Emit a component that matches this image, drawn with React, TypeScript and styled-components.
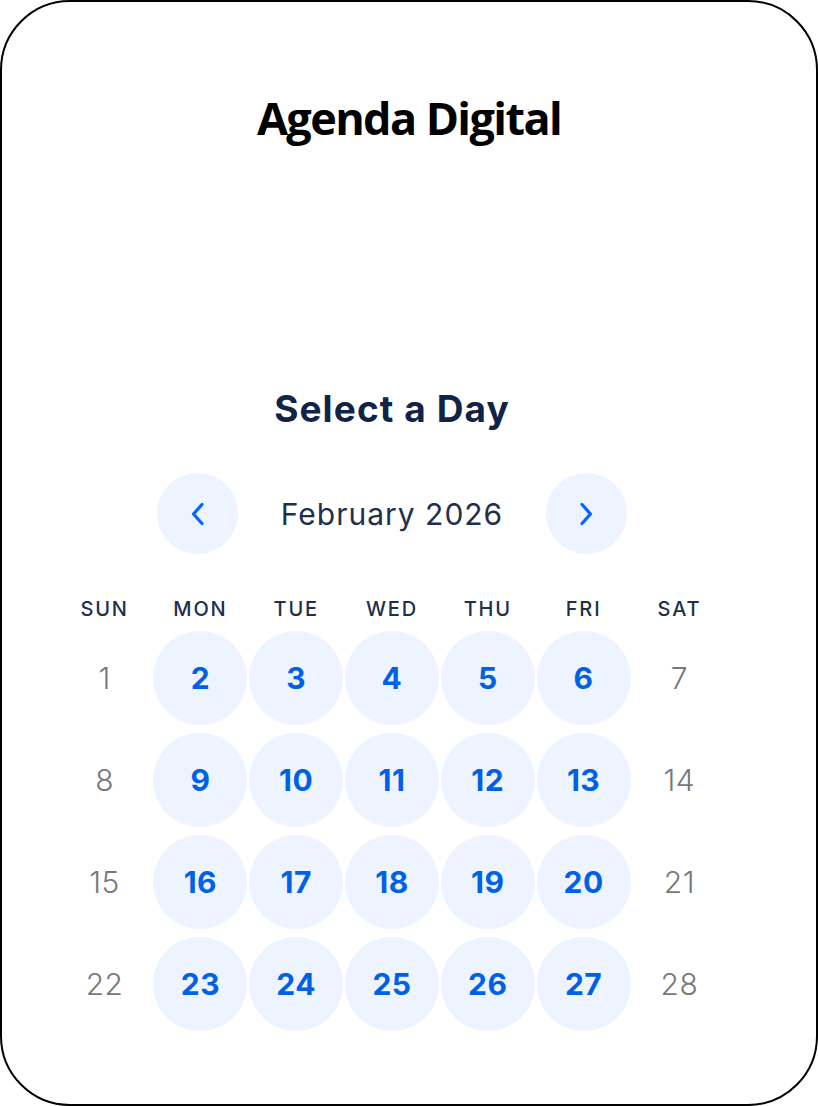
import React from "react";
import styled, { createGlobalStyle } from "styled-components";

const GlobalStyle = createGlobalStyle`
  html, body { margin: 0; padding: 0; background: #ffffff; }
  * { box-sizing: border-box; }
`;

const Frame = styled.div`
  width: 818px;
  height: 1106px;
  border: 2px solid #000000;
  border-radius: 70px;
  background: #ffffff;
  display: flex;
  flex-direction: column;
  align-items: center;
  overflow: hidden;
`;

const Title = styled.h1`
  margin: 93px 0 0 0;
  font-family: "Open Sans", "Liberation Sans", sans-serif;
  font-weight: 700;
  font-size: 45px;
  line-height: 1;
  letter-spacing: -1.6px;
  color: #000000;
`;

const Scheduler = styled.section`
  margin-top: 250px;
  align-self: stretch;
  padding: 0 88px 0 54px;
  display: flex;
  flex-direction: column;
  align-items: center;
  font-family: Inter, "Liberation Sans", sans-serif;
  color: #1a2b49;
`;

const Heading = styled.h2`
  margin: 0;
  font-size: 37px;
  line-height: 1;
  font-weight: 700;
  letter-spacing: 1.1px;
  color: #0f2447;
`;

const NavRow = styled.div`
  margin-top: 46px;
  width: 470px;
  display: flex;
  align-items: center;
  justify-content: space-between;
`;

const NavButton = styled.button`
  width: 81px;
  height: 81px;
  border-radius: 50%;
  border: none;
  background: #eef4ff;
  display: flex;
  align-items: center;
  justify-content: center;
  padding: 0;
  cursor: pointer;
`;

const Month = styled.div`
  font-size: 30px;
  font-weight: 400;
  color: #1f2f4d;
  letter-spacing: 1px;
`;

const HeaderGrid = styled.div`
  margin-top: 39px;
  display: grid;
  grid-template-columns: repeat(7, 95.8px);
`;

const Weekday = styled.div`
  height: 32px;
  display: flex;
  align-items: center;
  justify-content: center;
  font-size: 20px;
  font-weight: 500;
  color: #1f2f4d;
  letter-spacing: 1.8px;
`;

const DaysGrid = styled.div`
  margin-top: 2px;
  display: grid;
  grid-template-columns: repeat(7, 95.8px);
  grid-auto-rows: 102px;
`;

const Cell = styled.div`
  display: flex;
  align-items: center;
  justify-content: center;
`;

const Day = styled.button<{ $available: boolean }>`
  width: 94px;
  height: 94px;
  border-radius: 50%;
  border: none;
  padding: 0;
  display: flex;
  align-items: center;
  justify-content: center;
  font-family: Inter, "Liberation Sans", sans-serif;
  font-size: 30px;
  letter-spacing: 0.5px;
  background: ${(p) => (p.$available ? "#eef4ff" : "transparent")};
  color: ${(p) => (p.$available ? "#0060e6" : "#76787b")};
  font-weight: ${(p) => (p.$available ? 700 : 300)};
`;

const Chevron = ({ dir }: { dir: "left" | "right" }) => (
  <svg width="16" height="26" viewBox="0 0 16 26" fill="none">
    <path
      d={dir === "left" ? "M12 3.5 L3.5 13 L12 22.5" : "M4 3.5 L12.5 13 L4 22.5"}
      stroke="#0069ff"
      strokeWidth="3.2"
      strokeLinecap="round"
      strokeLinejoin="round"
    />
  </svg>
);

const weekdays = ["SUN", "MON", "TUE", "WED", "THU", "FRI", "SAT"];

export default function App() {
  const days = Array.from({ length: 28 }, (_, i) => i + 1);
  return (
    <>
      <GlobalStyle />
      <Frame>
        <Title>Agenda Digital</Title>
        <Scheduler>
          <Heading>Select a Day</Heading>
          <NavRow>
            <NavButton aria-label="Previous month">
              <Chevron dir="left" />
            </NavButton>
            <Month>February 2026</Month>
            <NavButton aria-label="Next month">
              <Chevron dir="right" />
            </NavButton>
          </NavRow>
          <HeaderGrid>
            {weekdays.map((w) => (
              <Weekday key={w}>{w}</Weekday>
            ))}
          </HeaderGrid>
          <DaysGrid>
            {days.map((d) => {
              const dow = (d - 1) % 7;
              const available = dow !== 0 && dow !== 6;
              return (
                <Cell key={d}>
                  <Day $available={available}>{d}</Day>
                </Cell>
              );
            })}
          </DaysGrid>
        </Scheduler>
      </Frame>
    </>
  );
}
